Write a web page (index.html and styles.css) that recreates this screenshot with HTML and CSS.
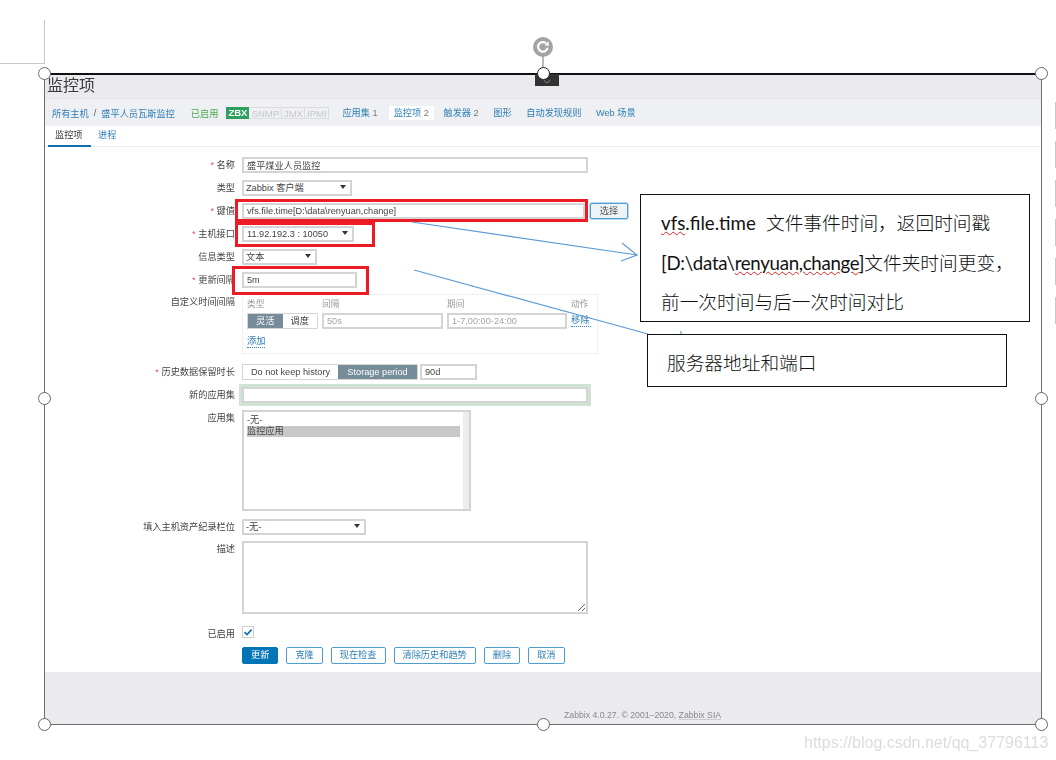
FILE: index.html
```html
<!DOCTYPE html>
<html lang="zh-CN">
<head>
    <meta charset="UTF-8">
    <title>监控项</title>
    <link rel="stylesheet" href="styles.css">
</head>
<body>
    <div class="margin-mark"></div>
    <div class="ruler">
        <span></span><span></span><span></span><span></span><span></span><span></span>
    </div>

    <div class="shot">
        <div class="shot-inner">
            <h1>监控项</h1>
            <nav class="nav">
                <a class="crumb">所有主机</a>
                <span class="slash">/</span>
                <a class="crumb">盛平人员瓦斯监控</a>
                <span class="enabled">已启用</span>
                <div class="badges">
                    <span class="badge on">ZBX</span><span class="badge b-snmp">SNMP</span><span class="badge b-jmx">JMX</span><span class="badge b-ipmi">IPMI</span>
                </div>
                <a class="nav-link first">应用集 <i>1</i></a>
                <a class="nav-link current">监控项 <i>2</i></a>
                <a class="nav-link">触发器 <i>2</i></a>
                <a class="nav-link">图形</a>
                <a class="nav-link">自动发现规则</a>
                <a class="nav-link">Web 场景</a>
            </nav>

            <div class="content">
                <div class="tabs">
                    <a class="tab active">监控项</a>
                    <a class="tab">进程</a>
                </div>

                <form class="form">
                    <div class="row">
                        <label><em>*</em> 名称</label>
                        <input class="field w-full" type="text" value="盛平煤业人员监控">
                    </div>
                    <div class="row">
                        <label>类型</label>
                        <div class="select w-type">Zabbix 客户端</div>
                    </div>
                    <div class="row">
                        <label><em>*</em> 键值</label>
                        <div class="inline">
                            <input class="field w-key" type="text" value="vfs.file.time[D:\data\renyuan,change]">
                            <button class="btn select-btn" type="button">选择</button>
                        </div>
                    </div>
                    <div class="row">
                        <label><em>*</em> 主机接口</label>
                        <div class="select w-iface">11.92.192.3 : 10050</div>
                    </div>
                    <div class="row">
                        <label>信息类型</label>
                        <div class="select w-info">文本</div>
                    </div>
                    <div class="row">
                        <label><em>*</em> 更新间隔</label>
                        <input class="field w-delay" type="text" value="5m">
                    </div>
                    <div class="row row-table">
                        <label>自定义时间间隔</label>
                        <div class="intervals">
                            <div class="iv-grid">
                                <span class="iv-head">类型</span>
                                <span class="iv-head">间隔</span>
                                <span class="iv-head">期间</span>
                                <span class="iv-head">动作</span>
                                <div class="toggle iv-toggle">
                                    <span class="opt on">灵活</span><span class="opt">调度</span>
                                </div>
                                <input class="field" type="text" placeholder="50s">
                                <input class="field" type="text" placeholder="1-7,00:00-24:00">
                                <a class="link-dotted">移除</a>
                            </div>
                            <a class="link-dotted add">添加</a>
                        </div>
                    </div>
                    <div class="row">
                        <label><em>*</em> 历史数据保留时长</label>
                        <div class="inline tight">
                            <div class="toggle">
                                <span class="opt hist-a">Do not keep history</span><span class="opt on hist-b">Storage period</span>
                            </div>
                            <input class="field w-days" type="text" value="90d">
                        </div>
                    </div>
                    <div class="row">
                        <label>新的应用集</label>
                        <input class="field w-full focused" type="text">
                    </div>
                    <div class="row">
                        <label>应用集</label>
                        <div class="listbox">
                            <div class="list-items">
                                <div class="list-item">-无-</div>
                                <div class="list-item picked">监控应用</div>
                            </div>
                            <div class="scrollbar"></div>
                        </div>
                    </div>
                    <div class="row row-inv">
                        <label>填入主机资产纪录栏位</label>
                        <div class="select w-inv">-无-</div>
                    </div>
                    <div class="row row-desc">
                        <label>描述</label>
                        <textarea class="field w-full desc"></textarea>
                    </div>
                    <div class="row row-check">
                        <label>已启用</label>
                        <div class="check">
                            <svg width="10" height="10" viewBox="0 0 10 10"><path d="M1.5 5.2 L4 7.6 L8.6 2.6" fill="none" stroke="#0f6fb0" stroke-width="1.7"/></svg>
                        </div>
                    </div>
                    <div class="row row-buttons">
                        <span></span>
                        <div class="buttons">
                            <button class="btn primary" type="button">更新</button>
                            <button class="btn" type="button">克隆</button>
                            <button class="btn" type="button">现在检查</button>
                            <button class="btn" type="button">清除历史和趋势</button>
                            <button class="btn" type="button">删除</button>
                            <button class="btn" type="button">取消</button>
                        </div>
                    </div>
                </form>
            </div>

            <footer class="footer">Zabbix 4.0.27. © 2001–2020, <u>Zabbix SIA</u></footer>
        </div>
    </div>

    <!-- 标注 -->
    <div class="red-box red-key"></div>
    <div class="red-box red-iface"></div>
    <div class="red-box red-delay"></div>

    <svg class="arrows" width="1056" height="760" viewBox="0 0 1056 760">
        <g fill="none" stroke="#5b9bd5" stroke-width="1.2">
            <path d="M412 222 L637 255"/>
            <path d="M622 243 L637 255 L621 261"/>
            <path d="M414 270 L648 334"/>
            <path d="M681 331 L681 334"/>
        </g>
        <path d="M543 55 V73" stroke="#777" stroke-width="1"/>
    </svg>

    <div class="note note-key">
        <p><span class="latin"><span class="typo">vfs</span>.file.time</span> &nbsp;文件事件时间，返回时间戳</p>
        <p><span class="latin narrow">[D:\data\<span class="typo">renyuan,change</span>]</span>文件夹时间更变，</p>
        <p>前一次时间与后一次时间对比</p>
    </div>
    <div class="note note-addr">
        <p>服务器地址和端口</p>
    </div>

    <div class="rotate">
        <svg width="20" height="20" viewBox="0 0 20 20">
            <circle cx="10" cy="10" r="10" fill="#a3a3a3"/>
            <path d="M14.6 10.6 A4.8 4.8 0 1 1 13 6.2" fill="none" stroke="#fff" stroke-width="2.2"/>
            <path d="M11.4 8.6 L16 8.8 L15.4 4.2 Z" fill="#fff"/>
        </svg>
    </div>
    <div class="tag">
        <svg width="10" height="6" viewBox="0 0 10 6"><path d="M1.5 1 L5 4 L8.5 1" fill="none" stroke="#8a8a8a" stroke-width="1"/></svg>
    </div>
    <span class="handle h-tl"></span>
    <span class="handle h-tc"></span>
    <span class="handle h-tr"></span>
    <span class="handle h-ml"></span>
    <span class="handle h-mr"></span>
    <span class="handle h-bl"></span>
    <span class="handle h-bc"></span>
    <span class="handle h-br"></span>

    <div class="watermark">https://blog.csdn.net/qq_37796113</div>
</body>
</html>
```

FILE: styles.css
```css
* {
    box-sizing: border-box;
}
html, body {
    margin: 0;
    padding: 0;
    height: 760px;
    overflow: hidden;
}
body {
    position: relative;
    background-color: #fff;
    font-family: 'Liberation Sans', 'Noto Sans CJK SC', sans-serif;
    color: #333;
}

/* 页面边上的标记 */
.margin-mark {
    position: absolute;
    left: 0;
    top: 20px;
    width: 45px;
    height: 44px;
    border-right: 1px solid #c8c8c8;
    border-bottom: 1px solid #c8c8c8;
}
.ruler {
    position: absolute;
    left: 1055px;
    top: 102px;
    display: flex;
    flex-direction: column;
    gap: 12px;
}
.ruler span {
    display: block;
    width: 1px;
    height: 27px;
    background-color: #c8c8c8;
}

/* 截图 */
.shot {
    position: absolute;
    left: 44px;
    top: 73px;
    width: 998px;
    height: 652px;
    border: 1px solid #6e6e6e;
    border-top: 2px solid #111;
    background-color: #ebebef;
}
.shot-inner {
    height: 100%;
    display: flex;
    flex-direction: column;
    filter: blur(0.45px);
}
h1 {
    margin: 0;
    height: 23px;
    padding: 1px 0 0 2px;
    font-size: 16px;
    font-weight: normal;
    line-height: 20px;
    color: #3a3a3a;
}
.nav {
    height: 28px;
    display: flex;
    align-items: center;
    padding-left: 7px;
    font-size: 9.2px;
    background-color: #eef0f3;
    border-top: 1px solid #e4e4e8;
    color: #2f7fb5;
}
.slash {
    margin: 0 5px;
    color: #555;
}
.crumb {
    color: #2f7fb5;
}
.enabled {
    margin: 0 8px 0 16px;
    color: #4fa64f;
}
.badges {
    display: flex;
    height: 12px;
    margin-right: 13px;
}
.badge {
    height: 12px;
    font-size: 9.5px;
    line-height: 11px;
    text-align: center;
    color: #c6c8ca;
    border: 1px solid #dcdcdc;
    border-left: none;
}
.badge.on {
    width: 23px;
    border: none;
    line-height: 12px;
    font-weight: bold;
    color: #fff;
    background-color: #2f9f5f;
}
.b-snmp { width: 33px; }
.b-jmx { width: 23px; }
.b-ipmi { width: 24px; }
.nav-link {
    padding: 0 5px;
    height: 14px;
    line-height: 14px;
    margin-right: 4.6px;
    white-space: nowrap;
}
.nav-link i {
    font-style: normal;
    color: #777;
}
.nav-link.current {
    background-color: #fff;
}
.nav-link.first {
    padding-left: 0;
    margin-right: 6px;
}
.content {
    height: 546px;
    background-color: #fff;
}
.tabs {
    height: 21px;
    display: flex;
    padding-left: 3px;
    border-bottom: 1px solid #ececec;
    font-size: 9.2px;
}
.tab {
    height: 21px;
    line-height: 19px;
    padding: 0 7px;
    color: #2f7fb5;
}
.tab.active {
    width: 43px;
    color: #333;
    border-bottom: 2px solid #0f6fb0;
}

/* 表单 */
.form {
    padding-top: 10px;
    display: flex;
    flex-direction: column;
    gap: 7px;
}
.row {
    display: grid;
    grid-template-columns: 190px 1fr;
    column-gap: 7px;
    font-size: 9.2px;
}
.row label {
    text-align: right;
    line-height: 16px;
    color: #444;
}
.row label em {
    font-style: normal;
    color: #d9534f;
}
.field {
    display: block;
    height: 16px;
    padding: 0 3px;
    border: 2px solid #d4d4d4;
    border-radius: 0;
    outline: none;
    background-color: #fff;
    font-family: inherit;
    font-size: 9.2px;
    color: #444;
}
.field::placeholder {
    color: #a5a5a5;
}
.w-full { width: 346px; }
.w-key { width: 343px; }
.w-delay { width: 115px; }
.w-days { width: 57px; }
.inline {
    display: flex;
    align-items: center;
    gap: 5px;
}
.inline.tight {
    gap: 2px;
}
.select {
    position: relative;
    height: 16px;
    line-height: 12px;
    padding-left: 2px;
    border: 2px solid #d4d4d4;
    background-color: #fff;
    font-size: 9.2px;
    color: #444;
}
.select::after {
    content: "";
    position: absolute;
    right: 4px;
    top: 3px;
    border-left: 3px solid transparent;
    border-right: 3px solid transparent;
    border-top: 4px solid #333;
}
.w-type { width: 110px; }
.w-iface { width: 112px; padding-left: 3px; }
.w-info { width: 75px; }
.w-inv { width: 124px; }

.row-table {
    margin-top: -1px;
    margin-bottom: 3px;
}
.intervals {
    width: 356px;
    height: 60px;
    padding: 4px 4px;
    border: 1px solid #f0f0f0;
}
.iv-grid {
    display: grid;
    grid-template-columns: 71px 121px 120px 20px;
    column-gap: 4px;
    row-gap: 3px;
}
.iv-head {
    height: 11px;
    line-height: 11px;
    font-size: 8.7px;
    white-space: nowrap;
    color: #999;
}
.iv-grid .field {
    width: 100%;
}
.toggle {
    display: flex;
    height: 16px;
    border: 1px solid #d5d5d5;
    font-size: 9.2px;
}
.opt {
    height: 100%;
    line-height: 14px;
    text-align: center;
    color: #444;
}
.opt.on {
    background-color: #768d99;
    color: #fff;
}
.iv-toggle .opt {
    width: 35.5px;
}
.hist-a {
    width: 95px;
}
.hist-b {
    width: 79px;
}
.link-dotted {
    align-self: center;
    color: #2f7fb5;
    font-size: 9.2px;
    border-bottom: 1px dotted #2f7fb5;
    line-height: 11px;
    white-space: nowrap;
}
.add {
    display: inline-block;
    margin-top: 7px;
}
.focused {
    box-shadow: 0 0 0 3px #cfe3d2;
}
.listbox {
    display: flex;
    width: 229px;
    height: 101px;
    border: 2px solid #d4d4d4;
}
.list-items {
    flex: 1;
    padding: 3px 3px 0;
}
.list-item {
    height: 11px;
    line-height: 11px;
    font-size: 9.2px;
    color: #444;
}
.list-item.picked {
    background-color: #c8c8c8;
}
.scrollbar {
    width: 6px;
    background-color: #ededed;
}
.row-inv {
    margin-top: 1px;
}
.row-desc {
    margin-top: -1px;
}
.desc {
    height: 73px;
    resize: both;
}
.row-check {
    margin-top: 5px;
}
.check {
    width: 12px;
    height: 12px;
    display: flex;
    align-items: center;
    justify-content: center;
    border: 1px solid #cfcfcf;
}
.row-buttons {
    margin-top: -2px;
}
.buttons {
    display: flex;
    gap: 8px;
}
.btn {
    height: 17px;
    padding: 0 8px;
    border: 1px solid #4c9ed3;
    border-radius: 2px;
    background-color: #fff;
    font-family: inherit;
    font-size: 9.2px;
    line-height: 13px;
    color: #2f7fb5;
}
.btn.primary {
    background-color: #0275b8;
    border-color: #0275b8;
    color: #fff;
}
.select-btn {
    width: 38px;
    height: 16px;
    padding: 0;
    background-color: #eef3f7;
    color: #555;
    box-shadow: 0 0 0 1px #bcd8ec;
}
.footer {
    flex: 1;
    padding: 38px 0 0 519px;
    font-size: 8.7px;
    color: #888;
    white-space: nowrap;
}
.footer u {
    text-decoration-color: #ccc;
}

/* 红框和说明 */
.red-box {
    position: absolute;
    border: 3px solid #ed1c24;
}
.red-key {
    left: 235px;
    top: 199px;
    width: 353px;
    height: 23px;
}
.red-iface {
    left: 235px;
    top: 222px;
    width: 140px;
    height: 25px;
}
.red-delay {
    left: 232px;
    top: 266px;
    width: 137px;
    height: 29px;
}
.arrows {
    position: absolute;
    left: 0;
    top: 0;
}
.note {
    position: absolute;
    background-color: #fff;
    border: 1px solid #111;
    font-family: 'Lato', 'Noto Sans CJK SC', sans-serif;
    font-size: 18.7px;
    font-weight: 300;
    color: #111;
}
.note p {
    margin: 0;
    height: 39.5px;
    line-height: 40px;
    white-space: nowrap;
}
.note-key {
    left: 640px;
    top: 194px;
    width: 390px;
    height: 128px;
    padding: 8px 0 0 20px;
}
.note-addr {
    left: 647px;
    top: 334px;
    width: 360px;
    height: 53px;
    padding: 8px 0 0 19px;
}
.latin {
    font-weight: 400;
}
.narrow {
    letter-spacing: -0.3px;
}
.typo {
    text-decoration: underline wavy #e02020 1px;
}

/* 选择框控制点 */
.rotate {
    position: absolute;
    left: 533px;
    top: 37px;
    width: 20px;
    height: 20px;
}
.tag {
    position: absolute;
    left: 535px;
    top: 74px;
    width: 24px;
    height: 12px;
    padding: 5px 0 0 7px;
    background-color: #333;
}
.tag svg {
    display: block;
}
.handle {
    position: absolute;
    width: 13px;
    height: 13px;
    margin: -6.5px 0 0 -6.5px;
    border: 1px solid #666;
    border-radius: 50%;
    background-color: #fff;
}
.h-tl { left: 44px; top: 73px; }
.h-tc { left: 543px; top: 73px; border-color: #222; }
.h-tr { left: 1041px; top: 73px; }
.h-ml { left: 44px; top: 398px; }
.h-mr { left: 1041px; top: 398px; }
.h-bl { left: 44px; top: 724px; }
.h-bc { left: 543px; top: 724px; }
.h-br { left: 1041px; top: 724px; }

.watermark {
    position: absolute;
    left: 804px;
    top: 734px;
    font-size: 16px;
    line-height: 18px;
    color: #dcdcdc;
    white-space: nowrap;
}
```
